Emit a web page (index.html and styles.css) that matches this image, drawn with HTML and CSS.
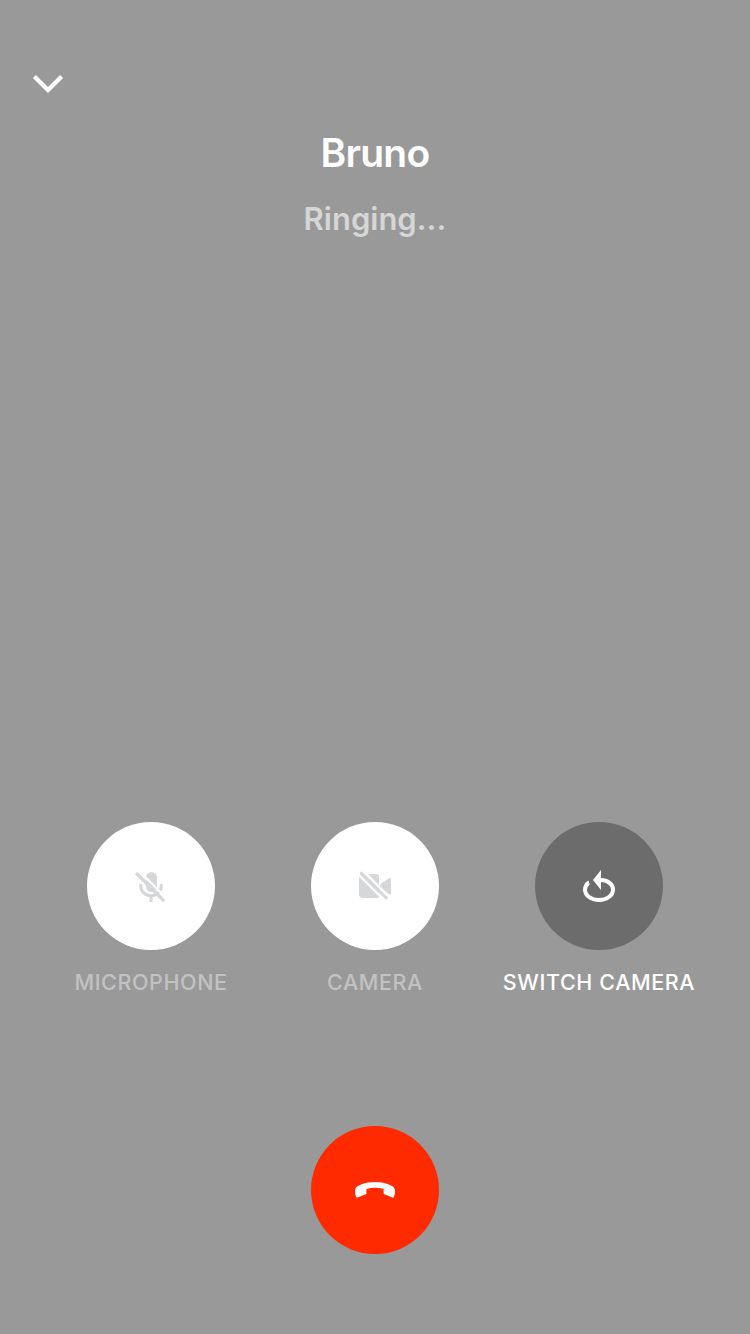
FILE: index.html
```
<!DOCTYPE html>
<html lang="en">
<head>
<meta charset="utf-8">
<title>Call</title>
<link rel="stylesheet" href="styles.css">
</head>
<body>
<main class="call">
  <header class="topbar">
    <button class="minimize" aria-label="Minimize">
      <svg width="32" height="20" viewBox="0 0 32 20"><path d="M2.400 2.500 16 16.100 29.600 2.500" fill="none" stroke="#fff" stroke-width="4.200"/></svg>
    </button>
  </header>
  <section class="caller">
    <h1 class="name">Bruno</h1>
    <p class="status">Ringing...</p>
  </section>
  <section class="controls">
    <div class="control disabled">
      <button class="circle light" aria-label="Microphone">
        <svg width="52" height="52" viewBox="0 0 52 52">
          <rect x="21" y="12" width="11" height="20" rx="5.500" fill="#d5d7d8"/>
          <path d="M15.700 24v2a10.300 9.700 0 0 0 20.600 0v-2M26 35v7" fill="none" stroke="#d5d7d8" stroke-width="3"/>
          <path d="M13.400 10.200 42 38.800" stroke="#fff" stroke-width="2.200"/>
          <path d="M11.200 13 39.200 41.200" stroke="#d5d7d8" stroke-width="3.200"/>
        </svg>
      </button>
      <span class="label">MICROPHONE</span>
    </div>
    <div class="control disabled">
      <button class="circle light" aria-label="Camera">
        <svg width="52" height="52" viewBox="0 0 52 52">
          <path d="M12 14h15q3 0 3 3v19q0 2-2 2H14q-4 0-4-4V16q0-2 2-2Z" fill="#d5d7d8"/>
          <path d="M40.200 18.200q1.800-1 1.800 1v14q0 2-1.800 1L33 29q-2-1.200-2-3t2-3Z" fill="#d5d7d8"/>
          <path d="M13.500 10.500 40.500 37.500" stroke="#fff" stroke-width="2.600"/>
          <path d="M11.500 12.300 38 38.800" stroke="#d5d7d8" stroke-width="3"/>
          <path d="M9.500 14.500 36 41" stroke="#fff" stroke-width="2.200"/>
        </svg>
      </button>
      <span class="label">CAMERA</span>
    </div>
    <div class="control">
      <button class="circle dark" aria-label="Switch camera">
        <svg width="52" height="52" viewBox="0 0 52 52">
          <path d="M27.500 20C35 20 40 24.500 40 29.500 40 35.500 33.800 40 26 40S12 35.500 12 29.500C12 26.500 13.300 24.300 15.800 22.500" fill="none" stroke="#fff" stroke-width="4"/>
          <path d="M28 10v20l-8-10Z" fill="#fff"/>
          <path d="M16 20.500V26l-3-1-1-2Z" fill="#fff"/>
        </svg>
      </button>
      <span class="label">SWITCH CAMERA</span>
    </div>
  </section>
  <footer class="footer">
    <button class="circle hangup" aria-label="Hang up">
      <svg width="60" height="40" viewBox="0 0 60 40"><path d="M30 12C39 12 50 15 50 20.500 50 23.500 49.500 25.500 48.800 27.200Q48.500 27.800 47.500 27.400L38.600 24V19Q34.500 17.700 30 17.700T21.400 19V24L12.500 27.400Q11.500 27.800 11.200 27.200C10.500 25.500 10 23.500 10 20.500 10 15 21 12 30 12Z" fill="#fff"/></svg>
    </button>
  </footer>
</main>
</body>
</html>
```
FILE: styles.css
```
* { box-sizing: border-box; }
body {
  margin: 0;
  background: #999;
  color: #fff;
  font-family: Inter, "Liberation Sans", sans-serif;
}
button { border: 0; padding: 0; background: none; }
svg { display: block; }
.call {
  display: flex;
  flex-direction: column;
  height: 1334px;
}
.topbar { height: 128px; padding: 74px 0 0 32px; }
.minimize { display: block; }
.caller { text-align: center; height: 694px; }
.name {
  margin: 0;
  font-size: 39px;
  line-height: 49px;
  font-weight: 600;
  letter-spacing: -0.75px;
}
.status {
  margin: 22px 0 0;
  font-size: 31px;
  line-height: 40px;
  font-weight: 600;
  letter-spacing: 0;
  color: #d6d6d6;
}
.controls {
  display: grid;
  grid-template-columns: repeat(3, 224px);
  justify-content: center;
}
.control {
  display: flex;
  flex-direction: column;
  align-items: center;
}
.circle {
  display: flex;
  align-items: center;
  justify-content: center;
  width: 128px;
  height: 128px;
  border-radius: 50%;
}
.light { background: #fff; }
.dark { background: #6c6c6c; }
.hangup { background: #ff2a00; }
.label {
  margin-top: 18px;
  font-size: 21.5px;
  line-height: 28px;
  font-weight: 550;
  letter-spacing: 0.6px;
  white-space: nowrap;
}
.disabled .label { color: #c2c2c2; }
.footer {
  display: flex;
  justify-content: center;
  padding-top: 130px;
}
```
